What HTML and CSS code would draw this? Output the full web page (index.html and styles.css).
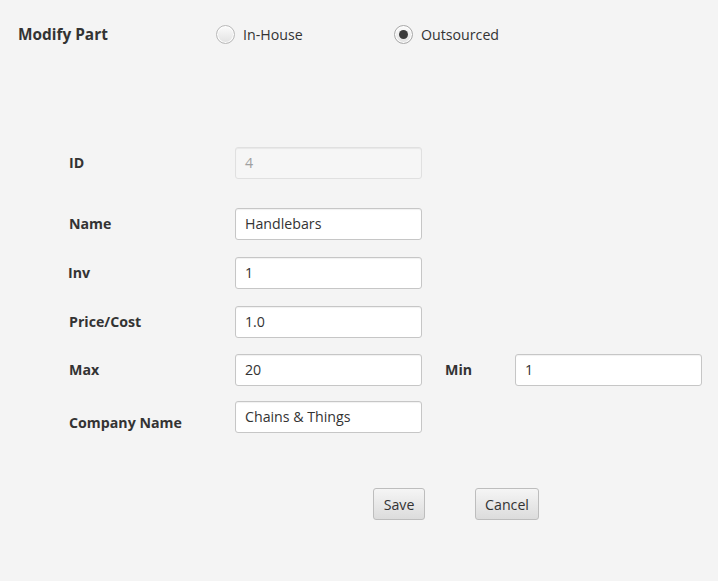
FILE: index.html
```html
<!DOCTYPE html>
<html>
<head>
<meta charset="utf-8">
<link rel="stylesheet" href="styles.css">
</head>
<body>
<div class="page">
  <div class="header">
    <div class="title">Modify Part</div>
    <label class="radio radio-first"><span class="dot"></span><span class="rlabel">In-House</span></label>
    <label class="radio radio-second"><span class="dot checked"></span><span class="rlabel">Outsourced</span></label>
  </div>
  <div class="form">
    <div class="row row-id">
      <div class="label">ID</div>
      <div class="field disabled">4</div>
    </div>
    <div class="row row-name">
      <div class="label">Name</div>
      <div class="field">Handlebars</div>
    </div>
    <div class="row row-inv">
      <div class="label label-inv">Inv</div>
      <div class="field">1</div>
    </div>
    <div class="row row-price">
      <div class="label">Price/Cost</div>
      <div class="field">1.0</div>
    </div>
    <div class="row row-max">
      <div class="label">Max</div>
      <div class="field">20</div>
      <div class="label label-min">Min</div>
      <div class="field">1</div>
    </div>
    <div class="row row-company">
      <div class="label label-company">Company Name</div>
      <div class="field">Chains &amp; Things</div>
    </div>
  </div>
  <div class="buttons">
    <button class="btn btn-save">Save</button>
    <button class="btn btn-cancel">Cancel</button>
  </div>
</div>
</body>
</html>
```
FILE: styles.css
```css
html, body {
  margin: 0;
  padding: 0;
  background: #f4f4f4;
}
body {
  font-family: "Open Sans", "Noto Sans", sans-serif;
  font-size: 14px;
  color: #333;
  width: 718px;
  height: 581px;
  overflow: hidden;
}
.page {
  display: flex;
  flex-direction: column;
}
.header {
  display: flex;
  align-items: center;
  height: 20px;
  margin-top: 24px;
  padding-left: 18px;
}
.title {
  font-weight: bold;
  font-size: 15.4px;
  width: 198px;
}
.radio {
  display: flex;
  align-items: center;
}
.radio-first {
  width: 178px;
}
.dot {
  width: 17px;
  height: 17px;
  border-radius: 50%;
  border: 1px solid #b9b9b9;
  background: linear-gradient(#fbfbfb, #e2e2e2);
  box-shadow: inset 0 0 0 1px #fdfdfd;
  display: flex;
  align-items: center;
  justify-content: center;
  margin-right: 8px;
}
.dot.checked {
  border-color: #a8a8a8;
}
.dot.checked::after {
  content: "";
  width: 9px;
  height: 9px;
  border-radius: 50%;
  background: #3c3c3c;
}
.rlabel {
  font-size: 14.2px;
  color: #333;
}
.form {
  display: flex;
  flex-direction: column;
  padding-left: 69px;
  margin-top: 103px;
}
.row {
  display: flex;
  align-items: center;
  height: 31px;
}
.row-name { margin-top: 30px; }
.row-inv { margin-top: 18px; }
.row-price { margin-top: 18px; }
.row-max { margin-top: 17px; }
.row-company { margin-top: 16px; }
.label {
  width: 166px;
  font-weight: bold;
  font-size: 14.2px;
  color: #333;
}
.label-inv { margin-left: -1px; width: 167px; }
.label-min { width: 70px; margin-left: 23px; }
.label-company { position: relative; top: 6px; }
.field {
  box-sizing: border-box;
  width: 187px;
  height: 32px;
  border: 1px solid #c6c6c6;
  border-radius: 3px;
  background: #fff;
  box-shadow: inset 0 1px 1px rgba(0,0,0,0.06);
  padding-left: 9px;
  display: flex;
  align-items: center;
  font-size: 14.2px;
  color: #333;
}
.field.disabled {
  background: #f6f6f6;
  border-color: #e0e0e0;
  color: #a0a0a0;
}
.buttons {
  display: flex;
  margin-top: 56px;
  padding-left: 373px;
}
.btn {
  box-sizing: border-box;
  height: 32px;
  border: 1px solid #bdbdbd;
  border-radius: 3px;
  background: linear-gradient(#f5f5f5, #dcdcdc);
  font-family: "Open Sans", "Noto Sans", sans-serif;
  font-size: 14.2px;
  color: #333;
  padding: 0;
}
.btn-save { width: 52px; }
.btn-cancel { width: 64px; margin-left: 50px; }
```
